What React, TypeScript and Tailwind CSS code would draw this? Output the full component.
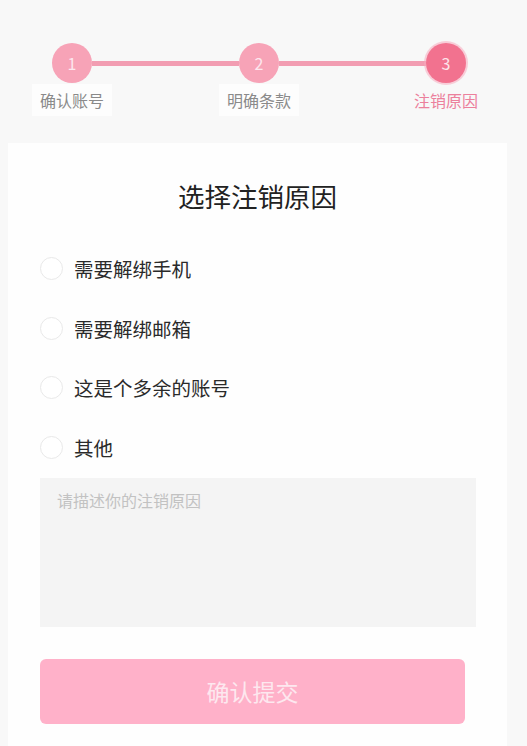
const font = { fontFamily: '"Noto Sans CJK SC", "Noto Sans", sans-serif' }

const steps = [
  { n: 1, label: "确认账号", active: false },
  { n: 2, label: "明确条款", active: false },
  { n: 3, label: "注销原因", active: true },
]

const reasons = ["需要解绑手机", "需要解绑邮箱", "这是个多余的账号", "其他"]

const StepDot = ({ n, active }: { n: number; active: boolean }) => (
  <div
    className={`flex h-[40px] w-[40px] shrink-0 items-center justify-center rounded-full text-[16px] ${
      active
        ? "bg-[#f2728f] text-[#fde3ea] shadow-[0_0_0_2px_rgba(248,170,190,0.55)]"
        : "bg-[#f7a3b7] text-[#fde7ee]"
    }`}
  >
    {n}
  </div>
)

export default function App() {
  return (
    <div className="min-h-[746px] bg-[#f8f8f8] pt-[43px]" style={font}>
      {/* stepper */}
      <div className="ml-[52px] w-[414px]">
        <div className="flex items-center">
          <StepDot n={1} active={false} />
          <div className="h-[5px] flex-1 bg-[#f29db2]" />
          <StepDot n={2} active={false} />
          <div className="h-[5px] flex-1 bg-[#f29db2]" />
          <StepDot n={3} active={true} />
        </div>
        <div className="mt-[1px] flex justify-between">
          {steps.map((s) => (
            <div key={s.n} className="flex w-[40px] justify-center">
              <span
                className={`whitespace-nowrap px-[8px] py-[4px] text-[16px] leading-[24px] ${
                  s.active ? "text-[#ec809c]" : "bg-[#fdfdfd] text-[#8a8a8a]"
                }`}
              >
                {s.label}
              </span>
            </div>
          ))}
        </div>
      </div>

      {/* card */}
      <div className="ml-[8px] mr-[20px] mt-[27px] min-h-[610px] bg-[#fefefe] px-[32px] pt-[35px]">
        <h1 className="text-center text-[26.5px] leading-[36px] text-[#222]">选择注销原因</h1>

        <div className="mt-[25px]">
          {reasons.map((r) => (
            <label key={r} className="flex h-[59.5px] items-center gap-[11px]">
              <span className="h-[23px] w-[23px] shrink-0 rounded-full border-[1.5px] border-[#e9e9e9] bg-white" />
              <span className="text-[19.5px] text-[#2a2a2a]">{r}</span>
            </label>
          ))}
        </div>

        <textarea
          placeholder="请描述你的注销原因"
          className="mt-[1px] block h-[149px] w-[436px] resize-none bg-[#f4f4f4] px-[17px] py-[11px] text-[16px] leading-[22px] text-[#333] outline-none placeholder:text-[#c2c2c2]"
          style={font}
        />

        <button
          className="mt-[32px] flex h-[65px] w-[425px] items-center justify-center rounded-[6px] bg-[#ffb1c9] text-[23px] text-[#fde8ef]"
          style={font}
        >
          确认提交
        </button>
      </div>
    </div>
  )
}
